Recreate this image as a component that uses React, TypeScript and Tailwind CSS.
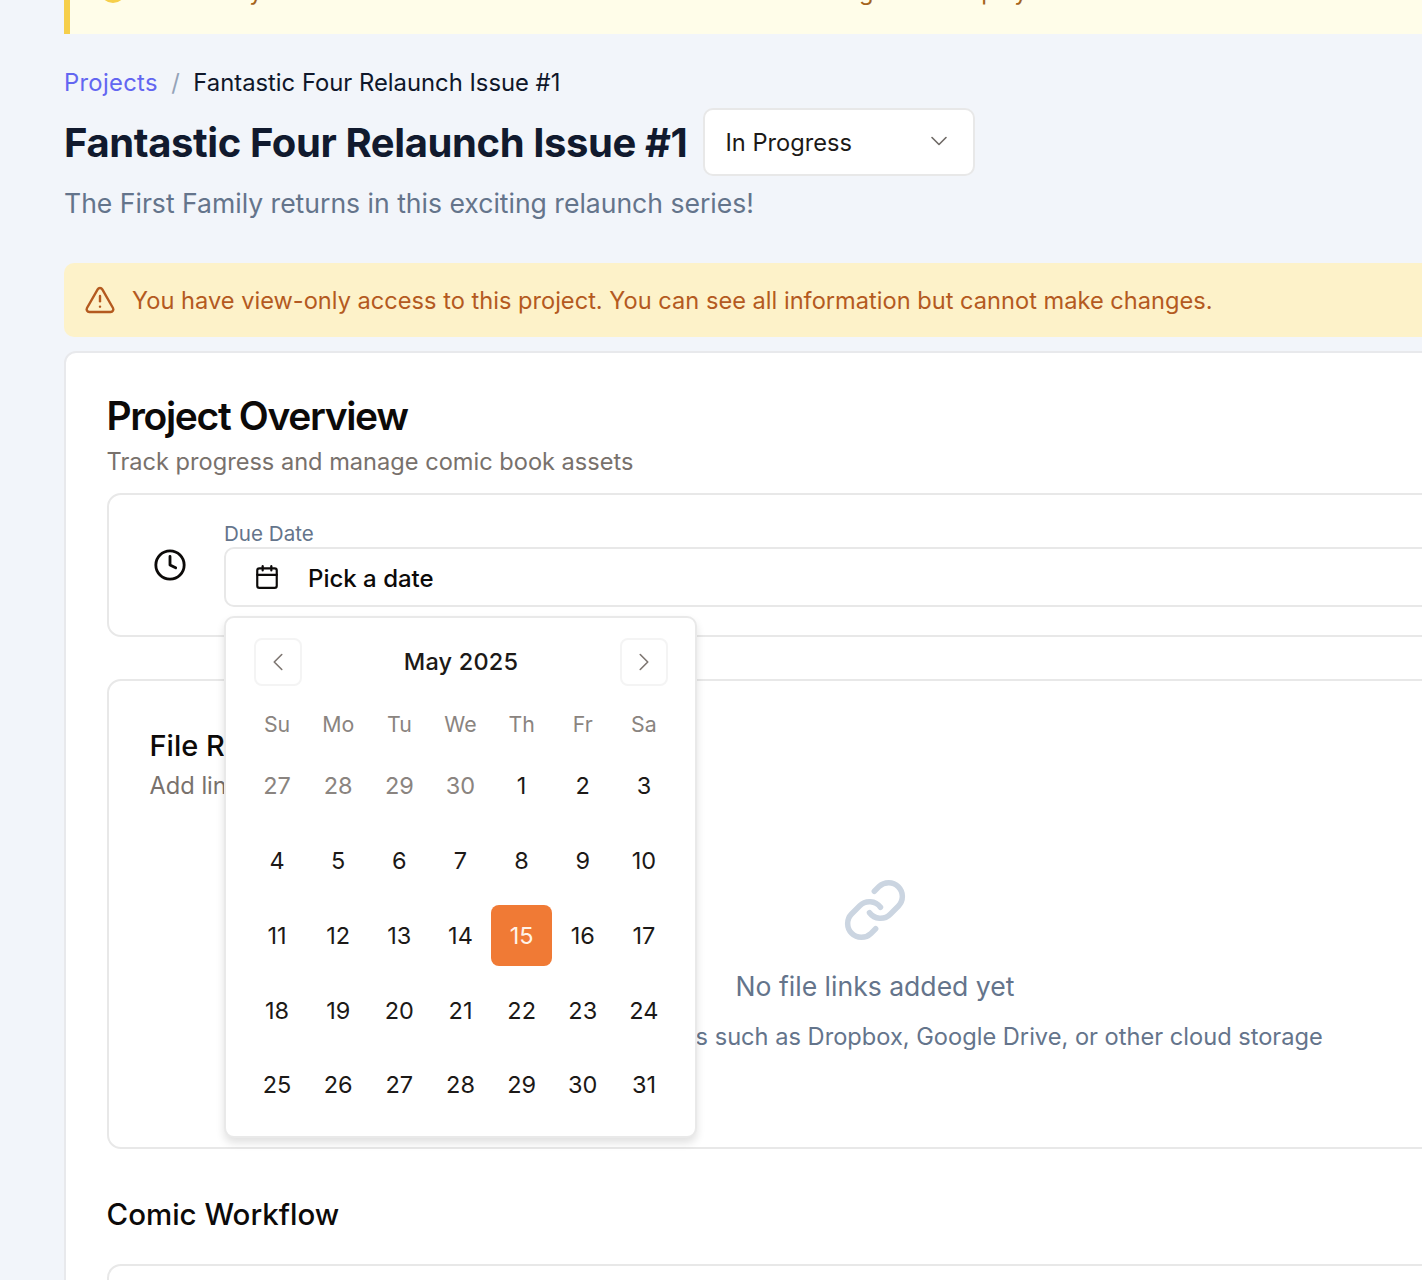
import { Calendar, ChevronDown, ChevronLeft, ChevronRight, Clock, Link, TriangleAlert } from "lucide-react";

const WEEKDAYS = ["Su", "Mo", "Tu", "We", "Th", "Fr", "Sa"];

const WEEKS = [
  [27, 28, 29, 30, 1, 2, 3],
  [4, 5, 6, 7, 8, 9, 10],
  [11, 12, 13, 14, 15, 16, 17],
  [18, 19, 20, 21, 22, 23, 24],
  [25, 26, 27, 28, 29, 30, 31],
];

function DatePopover() {
  return (
    <div className="absolute left-0 top-[97px] z-10 w-[473px] rounded-[10px] border-2 border-[#e9e9e9] bg-white px-[20.5px] py-[20px] shadow-[0_5px_8px_rgba(0,0,0,0.12)]">
      {/* Month header */}
      <div className="flex h-[48px] items-center justify-between pl-[7.5px] pr-[6.5px]">
        <button className="flex size-[48px] items-center justify-center rounded-[8px] border-2 border-[#f4f4f4] text-[#7d7671]">
          <ChevronLeft size={30} strokeWidth={1.3} />
        </button>
        <span className="text-[23.5px] font-medium tracking-[0.2px] text-[#1c1917]">May 2025</span>
        <button className="flex size-[48px] items-center justify-center rounded-[8px] border-2 border-[#f4f4f4] text-[#7d7671]">
          <ChevronRight size={30} strokeWidth={1.3} />
        </button>
      </div>

      <div className="mt-[25px] grid grid-cols-7">
        {WEEKDAYS.map((day) => (
          <div key={day} className="flex h-[28px] items-center justify-center text-[21.3px] text-[#8a8480]">
            {day}
          </div>
        ))}
      </div>

      {/* Day grid */}
      <div className="mt-[16.5px] flex flex-col gap-[13.75px]">
        {WEEKS.map((week, w) => (
          <div key={w} className="grid grid-cols-7">
            {week.map((day, d) => {
              const outside = w === 0 && day > 20;
              const selected = w === 2 && day === 15;
              return (
                <div
                  key={d}
                  className={
                    selected
                      ? "flex h-[61px] items-center justify-center rounded-[8px] bg-[#f07a35] text-[23.5px] text-[#fff3e9]"
                      : outside
                        ? "flex h-[61px] items-center justify-center text-[23.5px] text-[#8a8480]"
                        : "flex h-[61px] items-center justify-center text-[23.5px] text-[#1c1917]"
                  }
                >
                  {day}
                </div>
              );
            })}
          </div>
        ))}
      </div>
    </div>
  );
}

export default function App() {
  return (
    <div className="h-[1280px] overflow-hidden bg-[#f2f5fa] pl-[64px] font-[Inter,sans-serif]">
      <div className="w-[1622px]">
        {/* Notice banner, scrolled mostly out of view */}
        <div className="flex h-[34px] items-start gap-[33px] overflow-hidden border-l-[6px] border-[#f6cf4b] bg-[#fffde9] pl-[30px] text-[23.63px] text-[#a5641c]">
          <div className="-mt-[23px] size-[26px] shrink-0 rounded-full border-[3px] border-[#f6cf4b]" />
          <p className="-mt-[26px] whitespace-nowrap">
            Currently a file is on a server and the added data will be missing in the display
          </p>
        </div>

        {/* Breadcrumb */}
        <div className="mt-[33px] flex items-center gap-[13.5px] text-[23.8px] leading-[32px]">
          <span className="tracking-[0.3px] text-[#6366f1]">Projects</span>
          <span className="text-[#94a3b8]">/</span>
          <span className="text-[#0f172a]">Fantastic Four Relaunch Issue #1</span>
        </div>

        {/* Title row */}
        <div className="mt-[9px] flex items-center gap-[16px]">
          <h1 className="mt-[2px] text-[40px] font-bold tracking-[-0.4px] text-[#111a2e]">Fantastic Four Relaunch Issue #1</h1>
          <div className="flex h-[68px] w-[272px] items-center justify-between rounded-[10px] border-2 border-[#e8e8e8] bg-white pl-[20px] pr-[20px] pt-[2px] text-[23.63px] text-[#1c1917]">
            In Progress
            <ChevronDown size={28} strokeWidth={1.4} className="-mt-[4px] text-[#6f6a66]" />
          </div>
        </div>
        <p className="mt-[9px] text-[26.55px] leading-[36px] text-[#64748b]">
          The First Family returns in this exciting relaunch series!
        </p>

        {/* View-only notice */}
        <div className="mt-[42px] flex h-[74px] items-center gap-[16px] rounded-[10px] bg-[#fdf2c9] pl-[20px] text-[#b45a1f]">
          <TriangleAlert size={32} strokeWidth={1.8} />
          <span className="pt-[2px] text-[23.63px]">
            You have view-only access to this project. You can see all information but cannot make changes.
          </span>
        </div>

        {/* Project overview */}
        <div className="mt-[14px] h-[1200px] rounded-[12px] border-2 border-[#e8e9ec] bg-white px-[40.5px] pt-[39px]">
          <h2 className="text-[39px] leading-[48px] font-semibold tracking-[-1.35px] text-[#0c0a09]">Project Overview</h2>
          <p className="mt-[6px] text-[23.6px] leading-[32px] text-[#78716c]">Track progress and manage comic book assets</p>

          <div className="mt-[15px] flex h-[144px] items-start gap-[37px] rounded-[14px] border-2 border-[#e8e8e8] pl-[44.5px] pr-[40px] pt-[24px]">
            <Clock size={34} strokeWidth={2} className="mt-[29px] shrink-0 text-[#0c0a09]" />
            <div className="relative flex-1">
              <div className="pt-[1px] text-[20.6px] leading-[27px] text-[#64748b]">Due Date</div>
              <div className="flex h-[60px] items-center gap-[28px] rounded-[10px] border-2 border-[#e8e8e8] pl-[28px] text-[24px] font-medium text-[#0c0a09]">
                <Calendar size={26} strokeWidth={2} />
                <span className="pt-[3px]">Pick a date</span>
              </div>
              <DatePopover />
            </div>
          </div>

          {/* File references */}
          <div className="mt-[42px] h-[470px] rounded-[14px] border-2 border-[#e8e8e8] px-[41px] pt-[47px]">
            <div className="flex items-start justify-between">
              <div>
                <h3 className="text-[29px] leading-[36px] font-medium text-[#0c0a09]">File References</h3>
                <p className="mt-[6px] text-[23.63px] leading-[32px] text-[#78716c]">Add links to external files</p>
              </div>
              <div className="mt-[8px] h-[50px] w-[179px] rounded-[8px] border-2 border-[#eeeeee]" />
            </div>
            <div className="mt-[75px] flex flex-col items-center">
              <Link size={66} strokeWidth={2} className="text-[#cbd5e1]" />
              <p className="mt-[25px] text-[26.55px] leading-[36px] text-[#64748b]">No file links added yet</p>
              <p className="mt-[17px] text-[23.63px] leading-[32px] text-[#64748b]">
                Add links to external files such as Dropbox, Google Drive, or other cloud storage
              </p>
            </div>
          </div>

          {/* Workflow */}
          <h2 className="mt-[44px] text-[29.5px] leading-[42px] font-medium text-[#0c0a09]">Comic Workflow</h2>
          <div className="mt-[29px] h-[200px] rounded-[14px] border-2 border-[#e8e8e8]" />
        </div>
      </div>
    </div>
  );
}
